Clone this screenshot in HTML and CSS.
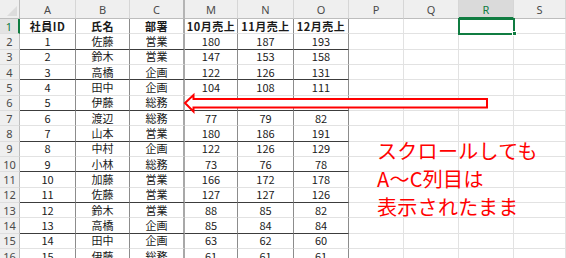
FILE: index.html
```html
<!DOCTYPE html>
<html lang="ja">
<head>
<meta charset="utf-8">
<link rel="stylesheet" href="styles.css">
</head>
<body>
<div class="wrap">
  <div class="sheet">
    <div class="row head">
      <div class="corner"></div>
      <div class="ch">A</div><div class="ch">B</div><div class="ch frz">C</div>
      <div class="ch">M</div><div class="ch">N</div><div class="ch">O</div>
      <div class="ch">P</div><div class="ch">Q</div><div class="ch on">R</div><div class="ch">S</div>
    </div>
    <div class="row hd">
      <div class="rh on">1</div>
      <div class="t">社員ID</div><div class="t">氏名</div><div class="t frz">部署</div>
      <div class="t">10月売上</div><div class="t">11月売上</div><div class="t">12月売上</div>
      <div class="g"></div><div class="g"></div><div class="g sel"></div><div class="g"></div>
    </div>
    <div class="row pb">
      <div class="rh">2</div>
      <div class="t">1</div><div class="t">佐藤</div><div class="t frz">営業</div>
      <div class="t">180</div><div class="t">187</div><div class="t">193</div>
      <div class="g"></div><div class="g"></div><div class="g"></div><div class="g"></div>
    </div>
    <div class="row">
      <div class="rh">3</div>
      <div class="t">2</div><div class="t">鈴木</div><div class="t frz">営業</div>
      <div class="t">147</div><div class="t">153</div><div class="t">158</div>
      <div class="g"></div><div class="g"></div><div class="g"></div><div class="g"></div>
    </div>
    <div class="row pb">
      <div class="rh">4</div>
      <div class="t">3</div><div class="t">高橋</div><div class="t frz">企画</div>
      <div class="t">122</div><div class="t">126</div><div class="t">131</div>
      <div class="g"></div><div class="g"></div><div class="g"></div><div class="g"></div>
    </div>
    <div class="row">
      <div class="rh">5</div>
      <div class="t">4</div><div class="t">田中</div><div class="t frz">企画</div>
      <div class="t">104</div><div class="t">108</div><div class="t">111</div>
      <div class="g"></div><div class="g"></div><div class="g"></div><div class="g"></div>
    </div>
    <div class="row pb">
      <div class="rh">6</div>
      <div class="t">5</div><div class="t">伊藤</div><div class="t frz">総務</div>
      <div class="t"></div><div class="t"></div><div class="t"></div>
      <div class="g"></div><div class="g"></div><div class="g"></div><div class="g"></div>
    </div>
    <div class="row">
      <div class="rh">7</div>
      <div class="t">6</div><div class="t">渡辺</div><div class="t frz">総務</div>
      <div class="t">77</div><div class="t">79</div><div class="t">82</div>
      <div class="g"></div><div class="g"></div><div class="g"></div><div class="g"></div>
    </div>
    <div class="row pb">
      <div class="rh">8</div>
      <div class="t">7</div><div class="t">山本</div><div class="t frz">営業</div>
      <div class="t">180</div><div class="t">186</div><div class="t">191</div>
      <div class="g"></div><div class="g"></div><div class="g"></div><div class="g"></div>
    </div>
    <div class="row">
      <div class="rh">9</div>
      <div class="t">8</div><div class="t">中村</div><div class="t frz">企画</div>
      <div class="t">122</div><div class="t">126</div><div class="t">129</div>
      <div class="g"></div><div class="g"></div><div class="g"></div><div class="g"></div>
    </div>
    <div class="row pb">
      <div class="rh">10</div>
      <div class="t">9</div><div class="t">小林</div><div class="t frz">総務</div>
      <div class="t">73</div><div class="t">76</div><div class="t">78</div>
      <div class="g"></div><div class="g"></div><div class="g"></div><div class="g"></div>
    </div>
    <div class="row">
      <div class="rh">11</div>
      <div class="t">10</div><div class="t">加藤</div><div class="t frz">営業</div>
      <div class="t">166</div><div class="t">172</div><div class="t">178</div>
      <div class="g"></div><div class="g"></div><div class="g"></div><div class="g"></div>
    </div>
    <div class="row pb">
      <div class="rh">12</div>
      <div class="t">11</div><div class="t">佐藤</div><div class="t frz">営業</div>
      <div class="t">127</div><div class="t">127</div><div class="t">126</div>
      <div class="g"></div><div class="g"></div><div class="g"></div><div class="g"></div>
    </div>
    <div class="row">
      <div class="rh">13</div>
      <div class="t">12</div><div class="t">鈴木</div><div class="t frz">営業</div>
      <div class="t">88</div><div class="t">85</div><div class="t">82</div>
      <div class="g"></div><div class="g"></div><div class="g"></div><div class="g"></div>
    </div>
    <div class="row pb">
      <div class="rh">14</div>
      <div class="t">13</div><div class="t">高橋</div><div class="t frz">企画</div>
      <div class="t">85</div><div class="t">84</div><div class="t">84</div>
      <div class="g"></div><div class="g"></div><div class="g"></div><div class="g"></div>
    </div>
    <div class="row">
      <div class="rh">15</div>
      <div class="t">14</div><div class="t">田中</div><div class="t frz">企画</div>
      <div class="t">63</div><div class="t">62</div><div class="t">60</div>
      <div class="g"></div><div class="g"></div><div class="g"></div><div class="g"></div>
    </div>
    <div class="row pb">
      <div class="rh">16</div>
      <div class="t">15</div><div class="t">伊藤</div><div class="t frz">総務</div>
      <div class="t">61</div><div class="t">61</div><div class="t">61</div>
      <div class="g"></div><div class="g"></div><div class="g"></div><div class="g"></div>
    </div>
  </div>

  <svg class="arrow" width="566" height="258" viewBox="0 0 566 258">
    <polygon points="185,103 193.5,95 193.5,99 487,99 487,107.5 193.5,107.5 193.5,111.5" fill="#fff" stroke="#ff0000" stroke-width="2" stroke-linejoin="miter"/>
  </svg>

  <div class="note">スクロールしても<br>A～C列目は<br>表示されたまま</div>
</div>
</body>
</html>
```

FILE: styles.css
```css
html, body {
  margin: 0;
  padding: 0;
  background: #ffffff;
}

.wrap {
  position: relative;
  width: 566px;
  height: 258px;
  overflow: hidden;
}

.sheet {
  display: grid;
  grid-template-columns: 20px 56px 54px 55px 53px 56px 55px 55px 55px 55px 52px;
  grid-template-rows: 19px repeat(16, 15.35px);
  font-family: "Noto Sans CJK JP", "Noto Sans", sans-serif;
  font-size: 11px;
  color: #1a1a1a;
}

.row {
  display: contents;
}

.row > div {
  box-sizing: border-box;
  display: flex;
  align-items: center;
  justify-content: center;
  line-height: 1;
  white-space: nowrap;
  overflow: hidden;
}

/* column header */
.corner {
  position: relative;
  background: #efefef;
  border-right: 1px solid #bdbdbd;
  border-bottom: 1px solid #bdbdbd;
}
.corner::after {
  content: "";
  position: absolute;
  right: 2px;
  bottom: 2px;
  width: 0;
  height: 0;
  border-left: 10px solid transparent;
  border-bottom: 10px solid #dcdcdc;
}

.ch {
  background: #efefef;
  color: #4a4a4a;
  font-family: "Noto Sans", "Liberation Sans", sans-serif;
  font-size: 11px;
  border-right: 1px solid #d6d6d6;
  border-bottom: 1px solid #bdbdbd;
  padding-top: 1px;
}
.ch.frz {
  border-right: 2px solid #b4b4b4;
}
.ch.on {
  background: #dadada;
  color: #107c41;
  border-bottom: 2px solid #107c41;
}

/* row header */
.rh {
  background: #efefef;
  color: #4a4a4a;
  font-family: "Noto Sans", "Liberation Sans", sans-serif;
  font-size: 11px;
  border-right: 1px solid #bdbdbd;
  border-bottom: 1px solid #dedede;
}
.rh.on {
  background: #e3e3e3;
  color: #107c41;
  border-right: 2px solid #107c41;
}

/* table cells */
.t {
  border-right: 1px solid #8c8c8c;
  border-bottom: 1px solid #e2e2e2;
}
.t.frz {
  border-right: 2px solid #a8a8a8;
}
.row.pb > .t {
  border-bottom: 1px solid #3c3c3c;
}
.row.hd > .t {
  font-weight: 700;
  letter-spacing: 0.5px;
}

/* plain grid cells */
.g {
  border-right: 1px solid #e2e2e2;
  border-bottom: 1px solid #e2e2e2;
}
.g.sel {
  position: relative;
  overflow: visible;
  outline: 2px solid #107c41;
  outline-offset: -1px;
}
.g.sel::after {
  content: "";
  position: absolute;
  right: -4px;
  bottom: -3px;
  width: 5px;
  height: 5px;
  background: #107c41;
  border: 1px solid #ffffff;
  box-sizing: border-box;
}

/* overlays */
.arrow {
  position: absolute;
  left: 0;
  top: 0;
  pointer-events: none;
}

.note {
  position: absolute;
  left: 377px;
  top: 137px;
  font-family: "Noto Sans CJK JP", sans-serif;
  font-size: 20px;
  line-height: 28px;
  color: #ff0000;
  letter-spacing: 0.3px;
  white-space: nowrap;
}
```
